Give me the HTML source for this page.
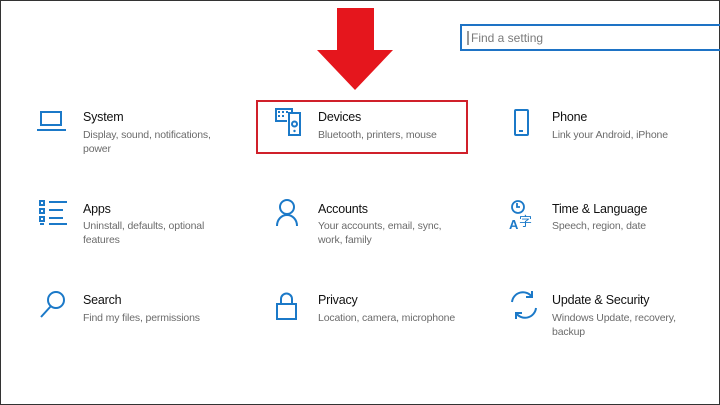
<!DOCTYPE html>
<html><head><style>
body{margin:0;width:720px;height:405px;overflow:hidden;background:#fff;font-family:"Liberation Sans",sans-serif;position:relative}
.frame{position:absolute;left:0;top:0;width:718px;height:403px;border:1px solid #333}
.t{position:absolute;font-size:12.5px;color:#111;letter-spacing:-0.2px}
.s{position:absolute;font-size:10.5px;color:#6b6b6b;line-height:14px;letter-spacing:-0.15px}
</style></head><body>
<div class="frame"></div>
<svg style="position:absolute;left:0;top:0" width="720" height="405">
<polygon points="337,8 374,8 374,50 393,50 355,90 317,50 337,50" fill="#e5161d"/>
<rect x="257" y="101" width="210" height="52" fill="none" stroke="#d0202a" stroke-width="2"/>
<rect x="461" y="25" width="262" height="25" fill="none" stroke="#1e73c5" stroke-width="2"/>
<line x1="468" y1="31" x2="468" y2="45" stroke="#333" stroke-width="1"/>
<g fill="none" stroke="#1b79c8" stroke-width="2">
<rect x="41" y="112" width="20" height="13"/><path d="M37 130h29"/>
<path d="M287 121h-11v-12h16v3"/><rect x="289" y="113" width="11" height="22"/><circle cx="294.5" cy="124" r="2.5"/>
<rect x="515" y="110" width="13" height="25" rx="1"/><path d="M519 131h4"/>
<rect x="40" y="201" width="4" height="4"/><rect x="40" y="209" width="4" height="4"/><rect x="40" y="217" width="4" height="4"/>
<path d="M49 202h18M49 210h14M49 218h14M49 224h18M40 224h4"/>
<circle cx="287" cy="207" r="7"/><path d="M277 226c0-7 5-11 10-11s10 4 10 11"/>
<circle cx="56" cy="300" r="8"/><path d="M51 306l-10 11"/>
<rect x="277" y="304" width="19" height="15"/><path d="M281 304v-5a5.5 5.5 0 0 1 11 0v5"/>
<path d="M512 302a11 11 0 0 1 20-5M536 308a11 11 0 0 1-20 5"/><path d="M532 291v6h-6M516 319v-6h6"/>
</g>
<g fill="#1b79c8"><rect x="278" y="111" width="2" height="2"/><rect x="282" y="111" width="2" height="2"/><rect x="286" y="111" width="2" height="2"/><rect x="278" y="115" width="2" height="2"/><rect x="282" y="115" width="2" height="2"/><circle cx="294.5" cy="131" r="1.2"/></g>
<g fill="none" stroke="#1b79c8" stroke-width="1.8"><circle cx="518" cy="207" r="6"/><path d="M517 203v4h3"/></g>
<text x="509" y="229" font-size="13" font-weight="bold" fill="#1b79c8" font-family="Liberation Sans">A</text>
<text x="519" y="226" font-size="13" fill="#1b79c8" font-family="Noto Sans CJK SC,sans-serif">字</text>
</svg>
<div style="position:absolute;left:471px;top:31px;font-size:12px;color:#7a7a7a">Find a setting</div>
<div class="t" style="left:83px;top:110px">System</div>
<div class="s" style="left:83px;top:128px">Display, sound, notifications,<br>power</div>
<div class="t" style="left:318px;top:110px">Devices</div>
<div class="s" style="left:318px;top:128px">Bluetooth, printers, mouse</div>
<div class="t" style="left:552px;top:110px">Phone</div>
<div class="s" style="left:552px;top:128px">Link your Android, iPhone</div>
<div class="t" style="left:83px;top:202px">Apps</div>
<div class="s" style="left:83px;top:219px">Uninstall, defaults, optional<br>features</div>
<div class="t" style="left:318px;top:202px">Accounts</div>
<div class="s" style="left:318px;top:219px">Your accounts, email, sync,<br>work, family</div>
<div class="t" style="left:552px;top:202px">Time &amp; Language</div>
<div class="s" style="left:552px;top:219px">Speech, region, date</div>
<div class="t" style="left:83px;top:293px">Search</div>
<div class="s" style="left:83px;top:311px">Find my files, permissions</div>
<div class="t" style="left:318px;top:293px">Privacy</div>
<div class="s" style="left:318px;top:311px">Location, camera, microphone</div>
<div class="t" style="left:552px;top:293px">Update &amp; Security</div>
<div class="s" style="left:552px;top:311px">Windows Update, recovery,<br>backup</div>
</body></html>
